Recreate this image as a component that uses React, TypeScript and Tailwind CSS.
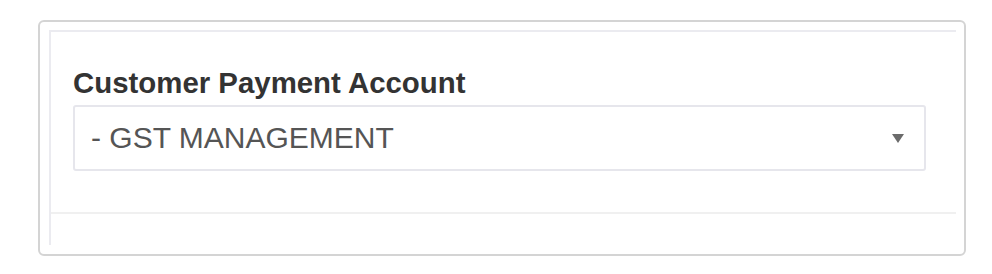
import React from "react";

export default function App() {
  return (
    <div className="w-[992px] h-[274px] bg-white overflow-hidden" style={{ fontFamily: '"Liberation Sans", Arial, sans-serif' }}>
      <div className="ml-[38px] mt-[20px] w-[928px] h-[236px] border-2 border-[#d4d4d4] rounded-[6px] pt-[8px] pr-[8px] pb-[9px] pl-[9px] flex">
        <div className="flex-1 flex flex-col border-l-2 border-t-2 border-[#ebebf0]">
          <div className="pt-[34px] pl-[22px] pb-[41px] border-b-2 border-[#f0f0f0]">
            <div className="text-[29.4px] leading-[33px] font-bold text-[#333333]">Customer Payment Account</div>
            <div className="mt-[6px] w-[853px] h-[66px] border-2 border-[#e6e6ec] rounded-[3px] flex items-center justify-between pl-[16px] pr-[20px]">
              <span className="text-[30px] leading-[30px] text-[#555555]">- GST MANAGEMENT</span>
              <svg width="12" height="9" viewBox="0 0 12 9">
                <polygon points="0,0 12,0 6,9" fill="#6b6b6b" />
              </svg>
            </div>
          </div>
          <div className="flex-1" />
        </div>
      </div>
    </div>
  );
}
